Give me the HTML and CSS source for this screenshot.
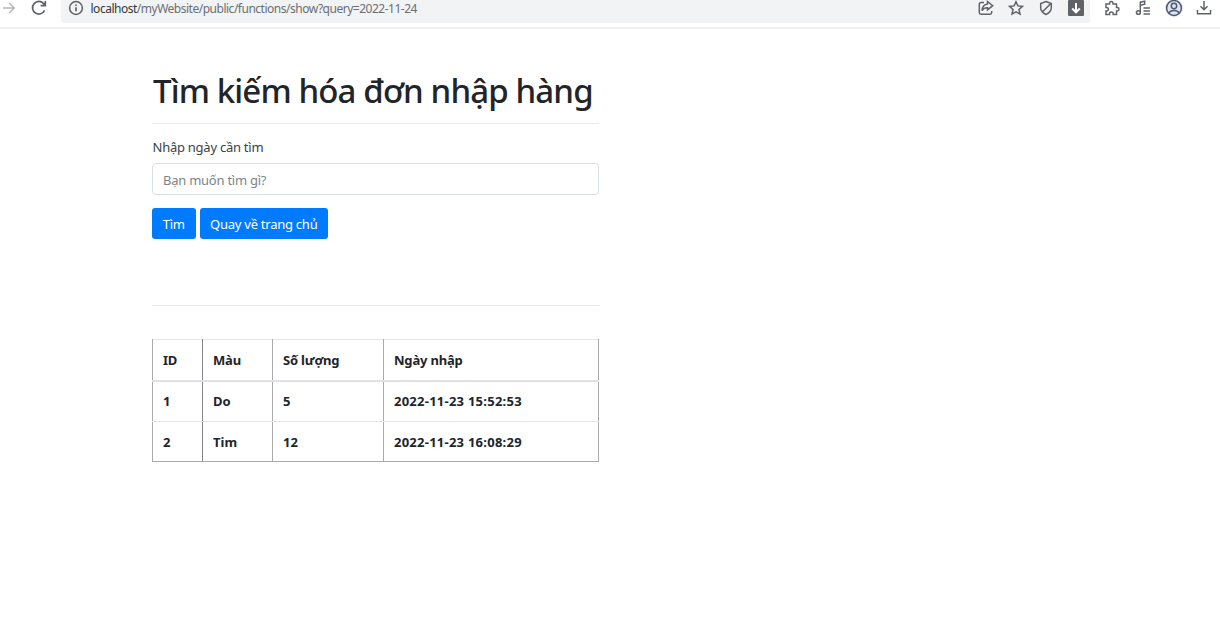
FILE: index.html
```html
<!DOCTYPE html>
<html lang="vi">
<head>
<meta charset="utf-8">
<title>Tìm kiếm hóa đơn nhập hàng</title>
<link rel="stylesheet" href="styles.css">
</head>
<body>
<header class="toolbar">
  <div class="nav">
    <svg class="icon forward" viewBox="0 0 16 16"><path d="M2 8h11M8.200 3l5 5-5 5"/></svg>
    <svg class="icon reload" viewBox="0 0 16 16"><path d="M13.600 10.300A6.300 6.300 0 1 1 12.600 3.600L14 5.200M14.300 1v4.700H9.600"/></svg>
  </div>
  <div class="address">
    <svg class="icon info" viewBox="0 0 16 16"><circle cx="8" cy="8" r="6.400"/><path d="M8 7.300v4M8 4.400v1.500" stroke-width="1.700"/></svg>
    <span class="url"><span class="host">localhost</span>/myWebsite/public/functions/show?query=2022-11-24</span>
    <div class="actions">
      <svg class="icon" viewBox="0 0 16 16"><path d="M6 2.500H3Q1.300 2.500 1.300 4.200v8.300q0 1.700 1.700 1.700h9q1.700 0 1.700-1.700v-1.500M9.500 1.500L14.700 5.700 9.500 9.900V7.700Q6 7.500 4 10.500 4.500 4.500 9.500 3.900Z"/></svg>
      <svg class="icon" viewBox="0 0 16 16"><path d="M8 1.700l1.900 4.200 4.500.5-3.400 3.100 1 4.600L8 11.800l-4 2.300 1-4.600L1.600 6.400l4.500-.5Z"/></svg>
      <svg class="icon" viewBox="0 0 16 16"><path d="M8 1.500l5.300 2v4q0 4.500-5.300 7-5.300-2.500-5.300-7v-4ZM12.800 3.500L4.300 12"/></svg>
      <svg class="icon filled" viewBox="0 0 16 16"><rect width="16" height="16" rx="1"/><path d="M8 3v9M4.200 8.500L8 12.300l3.800-3.800"/></svg>
    </div>
  </div>
  <div class="extensions">
    <svg class="icon" viewBox="0 0 16 16"><path d="M2 4h3.600V3.200a1.700 1.700 0 0 1 3.400 0V4h3.500v3.500h.8a1.700 1.700 0 0 1 0 3.400h-.8v3.600H9.200v-.7a1.800 1.800 0 0 0-3.600 0v.7H2v-3.600h.7a1.700 1.700 0 0 0 0-3.400H2Z"/></svg>
    <svg class="icon" viewBox="0 0 16 16"><path d="M5.300 12.200V2.200L9.700 1.200v3L5.300 5.200M8.500 8H15M8.500 11H15M8.500 14H15"/><ellipse cx="3.400" cy="12.500" rx="2" ry="1.800"/></svg>
    <svg class="icon profile" viewBox="0 0 18 18"><circle cx="9" cy="9" r="7.400"/><circle cx="9" cy="7" r="2.700"/><path d="M3.800 14.200Q5 11.500 9 11.500t5.200 2.700"/></svg>
    <svg class="icon" viewBox="0 0 16 16"><path d="M8 1v8.500M4.500 6.300L8 9.800l3.500-3.500M1.500 10v3.700h13V10"/></svg>
  </div>
</header>
<main class="page">
  <h1 class="title">Tìm kiếm hóa đơn nhập hàng</h1>
  <form class="search">
    <label class="label" for="query">Nhập ngày cần tìm</label>
    <input class="field" id="query" type="text" placeholder="Bạn muốn tìm gì?">
    <div class="buttons">
      <button class="btn find" type="button">Tìm</button>
      <button class="btn home" type="button">Quay về trang chủ</button>
    </div>
  </form>
  <table class="invoices">
    <colgroup><col class="c-id"><col class="c-color"><col class="c-qty"><col class="c-date"></colgroup>
    <thead><tr><th>ID</th><th>Màu</th><th>Số lượng</th><th>Ngày nhập</th></tr></thead>
    <tbody>
      <tr><th>1</th><th>Do</th><th>5</th><th class="stamp">2022-11-23 15:52:53</th></tr>
      <tr><th>2</th><th>Tim</th><th>12</th><th class="stamp">2022-11-23 16:08:29</th></tr>
    </tbody>
  </table>
</main>
</body>
</html>
```
FILE: styles.css
```css
* { box-sizing: border-box; }
body {
  margin: 0;
  background: #fff;
  color: #212529;
  font-family: "Noto Sans", "Open Sans", sans-serif;
  font-size: 13px;
  overflow: hidden;
}
.toolbar {
  display: flex;
  height: 29px;
  border-bottom: 2px solid #f0f0f1;
}
.nav { display: flex; width: 61px; gap: 14px; }
.icon {
  width: 16px;
  height: 16px;
  flex: none;
  fill: none;
  stroke: #5f6368;
  stroke-width: 1.5;
}
.forward { stroke: #b5b7b9; margin-left: 1px; }
.reload { stroke-width: 1.7; }
.address {
  display: flex;
  width: 1029px;
  height: 23px;
  padding-left: 7px;
  background: #f1f3f4;
  border-radius: 0 0 3px 3px;
}
.url {
  margin-left: 6.5px;
  font-size: 12px;
  line-height: 17px;
  letter-spacing: -0.49px;
  color: #6b6f73;
  white-space: nowrap;
}
.host { color: #36393c; }
.actions { display: flex; gap: 14px; margin-left: auto; margin-right: 6px; }
.filled rect { fill: #5f6368; stroke: none; }
.filled path { stroke: #fff; stroke-width: 2; }
.extensions { display: flex; gap: 14.5px; padding-left: 14px; }
.profile { width: 18px; height: 18px; stroke: #4d5870; margin: -1px -1px 0 -0.5px; border-radius: 50%; background: #e0e5f2; }
.page { width: 447px; margin-left: 152px; padding-top: 41px; }
.title {
  height: 54px;
  margin: 0;
  padding-left: 1px;
  border-bottom: 1px solid #e9e9ea;
  font-size: 33px;
  font-weight: 500;
  line-height: 42px;
  letter-spacing: -0.88px;
  white-space: nowrap;
}
.search {
  height: 182px;
  padding-top: 13px;
  border-bottom: 1px solid #e9e9ea;
}
.label { display: block; height: 26px; line-height: 20px; padding-left: 0.5px; letter-spacing: -0.25px; color: #3e4246; }
.field {
  display: block;
  width: 447px;
  height: 32px;
  padding: 2px 10px 0;
  border: 1px solid #dadfe4;
  border-radius: 4px;
  font: inherit;
  letter-spacing: -0.25px;
}
.field::placeholder { color: #7c848b; opacity: 1; }
.buttons { display: flex; gap: 4px; margin-top: 13px; }
.btn {
  height: 31px;
  padding: 1px 0 0;
  border: 0;
  border-radius: 3px;
  background: #007bff;
  color: #fff;
  font: inherit;
  letter-spacing: -0.25px;
  white-space: nowrap;
}
.find { width: 43.5px; }
.home { width: 128.5px; }
.invoices {
  width: 447px;
  margin-top: 33px;
  table-layout: fixed;
  border-collapse: collapse;
  border: 1px solid #aaa;
  border-top-color: #e4e6e8;
}
.c-id { width: 50px; }
.c-color { width: 70px; }
.c-qty { width: 111px; }
.invoices th {
  height: 41px;
  padding: 1px 0 0 10px;
  border-left: 1px solid #aaa;
  border-bottom: 1px solid #e4e6e8;
  text-align: left;
  font-weight: 700;
  letter-spacing: -0.2px;
  white-space: nowrap;
}
.invoices th:nth-child(2) { border-left-color: #858585; }
.invoices thead th { border-bottom: 2px solid #dee2e6; }
.invoices tbody th { padding-top: 0; letter-spacing: 0; }
.invoices tbody tr:last-child th { height: 40px; border-bottom-color: #aaa; }
.invoices .stamp { letter-spacing: 0.25px; }
```
